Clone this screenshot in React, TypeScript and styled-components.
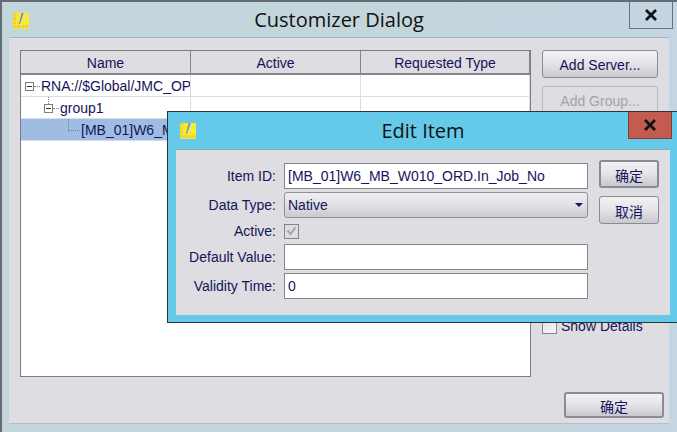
import React from 'react';
import styled, { createGlobalStyle } from 'styled-components';

const GlobalStyle = createGlobalStyle`
  html, body {
    margin: 0;
    padding: 0;
    width: 677px;
    height: 432px;
    overflow: hidden;
    font-family: "Liberation Sans", Arial, sans-serif;
  }
`;

const Desktop = styled.div`
  position: relative;
  width: 677px;
  height: 432px;
  overflow: hidden;
`;

const Window = styled.div`
  display: flex;
  flex-direction: column;
  height: 100%;
  box-sizing: border-box;
  border-top: 2px solid #646b73;
  border-left: 2px solid #646b73;
  background: linear-gradient(90deg, #c3d6dc 0%, #c3d6dc 60%, #c4d5e3 100%);
`;

const TitleBar = styled.div<{ $height: number }>`
  position: relative;
  flex: none;
  display: flex;
  align-items: center;
  height: ${(p) => p.$height}px;
`;

const AppIcon = styled.svg<{ $left: number; $top: number }>`
  flex: none;
  width: 16px;
  height: 16px;
  margin-left: ${(p) => p.$left}px;
  margin-top: ${(p) => p.$top}px;
`;

const TitleText = styled.div<{ $offset: number }>`
  flex: 1;
  text-align: center;
  font-family: "Open Sans", "Noto Sans", sans-serif;
  font-size: 20px;
  color: #111;
  padding-right: ${(p) => p.$offset}px;
`;

const CloseButton = styled.div<{ $danger?: boolean }>`
  position: absolute;
  top: 0;
  right: ${(p) => (p.$danger ? 5 : 4)}px;
  width: 44px;
  height: 27px;
  box-sizing: border-box;
  display: flex;
  align-items: center;
  justify-content: center;
  border: 1px solid ${(p) => (p.$danger ? '#7c4038' : '#6b7278')};
  border-top: 0;
  background: ${(p) => (p.$danger ? '#c25b50' : 'transparent')};
`;

const MainPanel = styled.div`
  flex: 1;
  display: flex;
  flex-direction: column;
  margin: 0 8px 8px 7px;
  padding: 12px 5px 5px 11px;
  box-sizing: border-box;
  background: #dddde2;
  border-top: 1px solid #a9b4bc;
  border-bottom: 1px solid #b5bfc6;
`;

const MainRow = styled.div`
  flex: none;
  display: flex;
  gap: 11px;
  height: 327px;
`;

const Tree = styled.div`
  width: 511px;
  box-sizing: border-box;
  border: 1px solid #7c7c84;
  background: #fff;
  overflow: hidden;
`;

const Columns = styled.div`
  display: grid;
  grid-template-columns: 170px 170px 169px;
`;

const HeaderCell = styled.div`
  height: 24px;
  box-sizing: border-box;
  display: flex;
  align-items: center;
  justify-content: center;
  padding-top: 1px;
  background: #dddde2;
  border-right: 1px solid #85858d;
  border-bottom: 2px solid #85858d;
  font-size: 14px;
  color: #14145a;
`;

const Row = styled.div<{ $selected?: boolean }>`
  display: grid;
  grid-template-columns: 170px 170px 169px;
  height: 22px;
  box-sizing: border-box;
  border-bottom: 1px solid #dcdce4;
  background: ${(p) => (p.$selected ? '#9fbde3' : '#fff')};
`;

const NameCell = styled.div<{ $indent: number }>`
  position: relative;
  height: 21px;
  box-sizing: border-box;
  display: flex;
  align-items: center;
  padding: 1px 0 0 ${(p) => p.$indent}px;
  border-right: 1px solid #dcdce4;
  font-size: 14px;
  color: #14145a;
  white-space: nowrap;
  overflow: hidden;
`;

const PlainCell = styled.div`
  border-right: 1px solid #dcdce4;
`;

const Expander = styled.span`
  position: relative;
  flex: none;
  width: 9px;
  height: 9px;
  box-sizing: border-box;
  border: 1px solid #7d7d7d;
  background: #fff;

  &::before {
    content: '';
    position: absolute;
    left: 1px;
    top: 3px;
    width: 5px;
    height: 1px;
    background: #333;
  }
`;

const HLine = styled.span<{ $width: number }>`
  flex: none;
  width: ${(p) => p.$width}px;
  margin: 0 1px 0 0;
  border-top: 1px dotted #808080;
`;

const VLine = styled.span<{ $left: number; $height: number }>`
  position: absolute;
  left: ${(p) => p.$left}px;
  top: 0;
  height: ${(p) => p.$height}px;
  border-left: 1px dotted #808080;
`;

const SideColumn = styled.div`
  flex: 1;
  position: relative;
  display: flex;
  flex-direction: column;
  gap: 8px;
`;

const ActionButton = styled.button<{ $width?: number; $height?: number; $strong?: boolean }>`
  display: block;
  flex: none;
  width: ${(p) => p.$width ?? 116}px;
  height: ${(p) => p.$height ?? 28}px;
  padding: 1px 0 0;
  box-sizing: border-box;
  border: ${(p) => (p.$strong ? 2 : 1)}px solid #8b8b92;
  border-radius: 3px;
  background: linear-gradient(180deg, #f2f2f5 0%, #e6e6ea 45%, #c8c8ce 100%);
  font-family: "Liberation Sans", "Noto Sans CJK SC", sans-serif;
  font-size: 14px;
  color: #14145a;

  &:disabled {
    border-color: #b8b8be;
    background: #dddde2;
    color: #a2a2aa;
  }
`;

const ShowDetails = styled.label`
  display: flex;
  align-items: center;
  gap: 4px;
  margin-top: 196px;
  font-size: 14px;
  color: #14145a;
`;

const CheckBox = styled.span<{ $disabled?: boolean }>`
  flex: none;
  width: 15px;
  height: 15px;
  box-sizing: border-box;
  display: flex;
  align-items: center;
  justify-content: center;
  border: 1px solid #85858d;
  background: ${(p) => (p.$disabled ? '#dddde2' : 'linear-gradient(135deg, #e4e4e8, #f6f6f8)')};
`;

const Footer = styled.div`
  flex: 1;
  display: flex;
  justify-content: flex-end;
  align-items: flex-end;
`;

const EditDialog = styled.div`
  position: absolute;
  left: 167px;
  top: 111px;
  width: 510px;
  height: 212px;
  box-sizing: border-box;
  display: flex;
  flex-direction: column;
  border: 1px solid #2f3337;
  border-right: 0;
  background: #65c9ea;
`;

const FormPanel = styled.div`
  flex: 1;
  display: flex;
  gap: 11px;
  margin: 0 7px 7px 8px;
  padding-top: 13px;
  background: #dddde2;
  border-top: 1px solid #8fa9b8;
`;

const Fields = styled.div`
  display: flex;
  flex-direction: column;
  width: 412px;
`;

const FieldRow = styled.div<{ $gap?: number }>`
  display: grid;
  grid-template-columns: 100px 304px;
  column-gap: 8px;
  align-items: center;
  height: 26px;
  margin-top: ${(p) => p.$gap ?? 0}px;
`;

const FieldLabel = styled.label`
  text-align: right;
  font-size: 14px;
  color: #14145a;
  white-space: nowrap;
`;

const TextInput = styled.input`
  width: 100%;
  height: 26px;
  box-sizing: border-box;
  padding: 0 3px;
  border: 1px solid #85858d;
  border-radius: 0;
  outline: none;
  background: #fff;
  font-family: "Liberation Sans", sans-serif;
  font-size: 14px;
  color: #14145a;
`;

const SelectBox = styled.div`
  height: 26px;
  box-sizing: border-box;
  display: flex;
  align-items: center;
  justify-content: space-between;
  padding: 0 4px 0 3px;
  border: 1px solid #8f8f96;
  border-radius: 3px;
  background: linear-gradient(180deg, #eeeef1 0%, #e2e2e6 50%, #c9c9ce 100%);
  font-size: 14px;
  color: #14145a;
`;

const Caret = styled.span`
  width: 0;
  height: 0;
  border-left: 4px solid transparent;
  border-right: 4px solid transparent;
  border-top: 4px solid #14145a;
`;

const DialogButtons = styled.div`
  display: flex;
  flex-direction: column;
  gap: 8px;
  margin-top: -3px;
`;

// yellow 4x4 grid with a grey pen stroke across it
const LogoIcon: React.FC<{ left: number; top: number }> = ({ left, top }) => {
  const cells: React.ReactNode[] = [];
  for (let y = 0; y < 4; y++) {
    for (let x = 0; x < 4; x++) {
      cells.push(
        <rect
          key={`${x}-${y}`}
          x={x * 4}
          y={y * 4}
          width={3.4}
          height={3.4}
          fill={x === 0 || y === 3 ? '#f7d414' : '#fff000'}
        />,
      );
    }
  }
  return (
    <AppIcon $left={left} $top={top} viewBox="0 0 16 16">
      <rect width="16" height="16" fill="#e9e59a" />
      {cells}
      <path d="M8.5 0 L11 0 L7.5 10 L5.5 12 Z" fill="#93938e" />
      <path d="M11 0 L12 0.5 L9 10 L7.5 10 Z" fill="#dcdcd6" />
    </AppIcon>
  );
};

const CloseGlyph: React.FC = () => (
  <svg width="14" height="12" viewBox="0 0 14 12">
    <path d="M2 1 L12 11 M12 1 L2 11" stroke="#111" strokeWidth="2.8" fill="none" />
  </svg>
);

const CheckGlyph: React.FC = () => (
  <svg width="11" height="10" viewBox="0 0 11 10">
    <path d="M1.5 4.5 L4.5 8 L9.5 1.5" stroke="#a4a4aa" strokeWidth="2" fill="none" />
  </svg>
);

const App: React.FC = () => {
  return (
    <Desktop>
      <GlobalStyle />
      <Window>
        <TitleBar $height={35}>
          <LogoIcon left={11} top={2} />
          <TitleText $offset={28}>Customizer Dialog</TitleText>
          <CloseButton>
            <CloseGlyph />
          </CloseButton>
        </TitleBar>
        <MainPanel>
          <MainRow>
            <Tree>
              <Columns>
                <HeaderCell>Name</HeaderCell>
                <HeaderCell>Active</HeaderCell>
                <HeaderCell>Requested Type</HeaderCell>
              </Columns>
              <Row>
                <NameCell $indent={4}>
                  <Expander />
                  <HLine $width={6} />
                  RNA://$Global/JMC_OPC
                </NameCell>
                <PlainCell />
                <PlainCell />
              </Row>
              <Row>
                <NameCell $indent={23}>
                  <VLine $left={27} $height={7} />
                  <Expander />
                  <HLine $width={6} />
                  group1
                </NameCell>
                <PlainCell />
                <PlainCell />
              </Row>
              <Row $selected>
                <NameCell $indent={47}>
                  <VLine $left={47} $height={11} />
                  <HLine $width={12} />
                  [MB_01]W6_MB_W010_ORD.In_Job_No
                </NameCell>
                <PlainCell />
                <PlainCell />
              </Row>
            </Tree>
            <SideColumn>
              <ActionButton>Add Server...</ActionButton>
              <ActionButton disabled>Add Group...</ActionButton>
              <ShowDetails>
                <CheckBox />
                Show Details
              </ShowDetails>
            </SideColumn>
          </MainRow>
          <Footer>
            <ActionButton $width={100} $height={26} $strong>
              确定
            </ActionButton>
          </Footer>
        </MainPanel>
      </Window>

      <EditDialog>
        <TitleBar $height={37}>
          <LogoIcon left={12} top={0} />
          <TitleText $offset={27}>Edit Item</TitleText>
          <CloseButton $danger>
            <CloseGlyph />
          </CloseButton>
        </TitleBar>
        <FormPanel>
          <Fields>
            <FieldRow>
              <FieldLabel>Item ID:</FieldLabel>
              <TextInput readOnly value="[MB_01]W6_MB_W010_ORD.In_Job_No" />
            </FieldRow>
            <FieldRow $gap={3}>
              <FieldLabel>Data Type:</FieldLabel>
              <SelectBox>
                Native
                <Caret />
              </SelectBox>
            </FieldRow>
            <FieldRow>
              <FieldLabel>Active:</FieldLabel>
              <CheckBox $disabled>
                <CheckGlyph />
              </CheckBox>
            </FieldRow>
            <FieldRow>
              <FieldLabel>Default Value:</FieldLabel>
              <TextInput readOnly value="" />
            </FieldRow>
            <FieldRow $gap={3}>
              <FieldLabel>Validity Time:</FieldLabel>
              <TextInput readOnly value="0" />
            </FieldRow>
          </Fields>
          <DialogButtons>
            <ActionButton $width={60} $strong>
              确定
            </ActionButton>
            <ActionButton $width={60}>取消</ActionButton>
          </DialogButtons>
        </FormPanel>
      </EditDialog>
    </Desktop>
  );
};

export default App;
